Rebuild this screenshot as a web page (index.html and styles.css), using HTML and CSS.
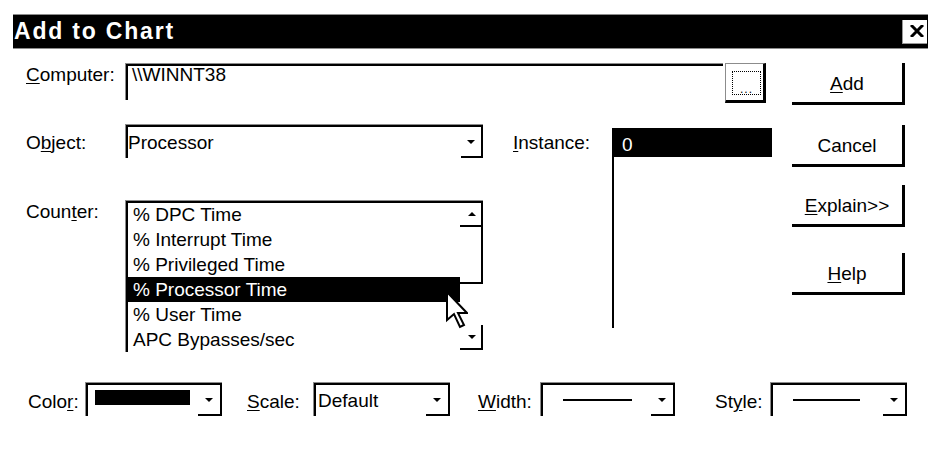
FILE: index.html
```html
<!DOCTYPE html>
<html>
<head>
  <meta charset="UTF-8" />
  <title>Add to Chart</title>
  <link rel="stylesheet" href="styles.css">
</head>
<body>
  <div class="titlebar">
    <span class="title">Add to Chart</span>
    <span class="close">
      <svg width="14" height="12" viewBox="0 0 14 12">
        <path d="M1 0 L13 12 M13 0 L1 12" stroke="#000" stroke-width="3" />
      </svg>
    </span>
  </div>

  <div class="content">
    <div class="fields">
      <div class="row-computer">
        <div class="label"><u>C</u>omputer:</div>
        <div class="text-field">\\WINNT38</div>
        <div class="browse"><div class="focus-rect">...</div></div>
      </div>

      <div class="object-grid">
        <div class="label label-mid">O<u>b</u>ject:</div>
        <div class="combo">
          <div class="combo-value">Processor</div>
          <div class="drop"><span class="arrow-down"></span></div>
        </div>
        <div class="label label-mid label-instance"><u>I</u>nstance:</div>
        <div class="instance-list">
          <div class="inst-item">0</div>
        </div>

        <div class="label">Coun<u>t</u>er:</div>
        <div class="listbox">
          <div class="items">
            <div class="item">% DPC Time</div>
            <div class="item">% Interrupt Time</div>
            <div class="item">% Privileged Time</div>
            <div class="item selected">% Processor Time</div>
            <div class="item">% User Time</div>
            <div class="item">APC Bypasses/sec</div>
          </div>
          <div class="scrollbar">
            <div class="sb-btn sb-up"><span class="arrow-up"></span></div>
            <div class="sb-thumb"></div>
            <div class="sb-track"></div>
            <div class="sb-btn sb-down"><span class="arrow-down"></span></div>
          </div>
          <svg class="cursor" width="22" height="38" viewBox="0 0 22 38">
            <path d="M1 1 L1 29 L8 23 L14 36 L18 34 L12 22 L21 22 Z" fill="#fff" stroke="#000" stroke-width="2" stroke-linejoin="miter" />
          </svg>
        </div>
      </div>
    </div>

    <div class="buttons">
      <div class="btn btn-add"><span><u>A</u>dd</span></div>
      <div class="btn btn-cancel"><span>Cancel</span></div>
      <div class="btn btn-explain"><span><u>E</u>xplain&gt;&gt;</span></div>
      <div class="btn btn-help"><span><u>H</u>elp</span></div>
    </div>
  </div>

  <div class="bottom">
    <div class="blabel color-label">Colo<u>r</u>:</div>
    <div class="combo combo-small">
      <div class="combo-value"><div class="swatch"></div></div>
      <div class="drop drop-wide"><span class="arrow-down"></span></div>
    </div>

    <div class="blabel scale-label"><u>S</u>cale:</div>
    <div class="combo combo-small">
      <div class="combo-value scale-value">Default</div>
      <div class="drop drop-wide"><span class="arrow-down"></span></div>
    </div>

    <div class="blabel width-label"><u>W</u>idth:</div>
    <div class="combo combo-small combo-width">
      <div class="combo-value"><div class="line-sample"></div></div>
      <div class="drop drop-wide"><span class="arrow-down"></span></div>
    </div>

    <div class="blabel style-label">St<u>y</u>le:</div>
    <div class="combo combo-small">
      <div class="combo-value"><div class="line-sample line-short"></div></div>
      <div class="drop drop-wide"><span class="arrow-down"></span></div>
    </div>
  </div>
</body>
</html>
```

FILE: styles.css
```css
body {
  margin: 0;
  background: #fff;
  color: #000;
  font-family: "Liberation Sans", Arial, sans-serif;
  font-size: 19px;
}
u {
  text-underline-offset: 2px;
}
.titlebar {
  display: flex;
  justify-content: space-between;
  align-items: center;
  margin: 14px 0 0 13px;
  height: 33px;
  background: #000;
  border-top: 1px solid #8c8c8c;
  border-bottom: 1px solid #8c8c8c;
}
.title {
  color: #fff;
  font-weight: bold;
  font-size: 23px;
  letter-spacing: 1.8px;
  line-height: 33px;
  padding-left: 1px;
}
.close {
  display: flex;
  justify-content: center;
  align-items: center;
  width: 25px;
  height: 24px;
  margin-right: 1px;
  background: #fff;
  border-left: 1px solid #999;
  border-bottom: 1px solid #999;
  box-sizing: border-box;
  padding-left: 3px;
}
.content {
  display: flex;
  margin-top: 14px;
  padding-left: 26px;
}
.fields {
  width: 740px;
}
.label {
  line-height: 22px;
  padding-top: 1px;
}
.label-mid {
  padding-top: 8px;
}
.row-computer {
  display: flex;
  height: 40px;
}
.row-computer .label {
  width: 99px;
}
.text-field {
  width: 598px;
  height: 37px;
  box-sizing: border-box;
  border-top: 1px solid #8c8c8c;
  border-left: 1px solid #8c8c8c;
  box-shadow: inset 2px 2px 0 #000;
  padding-left: 6px;
  line-height: 22px;
}
.browse {
  display: flex;
  width: 41px;
  height: 40px;
  margin-left: 2px;
  box-sizing: border-box;
  border-top: 1px solid #8c8c8c;
  border-left: 1px solid #8c8c8c;
  border-right: 3px solid #000;
  border-bottom: 3px solid #000;
  padding: 7px 2px 5px 6px;
}
.focus-rect {
  flex: 1;
  display: flex;
  justify-content: center;
  align-items: flex-end;
  border: 1px dotted #000;
  font-size: 12px;
  line-height: 10px;
  letter-spacing: 1px;
}
.object-grid {
  display: grid;
  grid-template-columns: 99px 358px 129px 160px;
  grid-template-rows: 34px 152px;
  row-gap: 42px;
  margin-top: 21px;
}
.label-instance {
  padding-left: 30px;
}
.combo {
  display: flex;
  height: 34px;
  box-sizing: border-box;
  border-top: 1px solid #8c8c8c;
  border-left: 1px solid #8c8c8c;
  box-shadow: inset 2px 2px 0 #000;
}
.combo-value {
  flex: 1;
  padding: 7px 0 0 2px;
  line-height: 22px;
  white-space: nowrap;
}
.drop {
  display: flex;
  justify-content: center;
  align-items: center;
  width: 22px;
  padding-top: 3px;
  box-sizing: border-box;
  border-right: 2px solid #000;
  border-bottom: 2px solid #000;
}
.drop-wide {
  width: 24px;
}
.arrow-down,
.arrow-up {
  width: 0;
  height: 0;
  border-left: 4px solid transparent;
  border-right: 4px solid transparent;
}
.arrow-down {
  border-top: 4px solid #000;
}
.arrow-up {
  border-bottom: 4px solid #000;
}
.instance-list {
  grid-row: 1 / span 2;
  grid-column: 4;
  margin-top: 4px;
  height: 200px;
  border-left: 2px solid #000;
}
.inst-item {
  height: 29px;
  box-sizing: border-box;
  background: #000;
  color: #fff;
  padding: 4px 0 0 8px;
  line-height: 25px;
}
.listbox {
  position: relative;
  display: flex;
  height: 152px;
  box-sizing: border-box;
  border-top: 1px solid #8c8c8c;
  border-left: 1px solid #8c8c8c;
  box-shadow: inset 2px 2px 0 #000;
}
.items {
  flex: 1;
  padding: 1px 0 0 2px;
}
.item {
  height: 25px;
  line-height: 25px;
  padding-left: 5px;
  white-space: nowrap;
}
.item.selected {
  background: #000;
  color: #fff;
}
.scrollbar {
  display: flex;
  flex-direction: column;
  width: 23px;
}
.sb-btn {
  display: flex;
  justify-content: center;
  align-items: center;
  height: 24px;
  box-sizing: border-box;
  padding-left: 3px;
  border-right: 2px solid #000;
  border-bottom: 2px solid #000;
}
.sb-up {
  margin-top: 2px;
}
.sb-thumb {
  height: 57px;
  box-sizing: border-box;
  border-right: 2px solid #000;
  border-bottom: 2px solid #000;
}
.sb-track {
  flex: 1;
}
.sb-down {
  height: 25px;
  margin-bottom: 2px;
}
.cursor {
  position: absolute;
  left: 320px;
  top: 90px;
}
.buttons {
  display: flex;
  flex-direction: column;
  width: 113px;
  margin-left: 26px;
}
.btn {
  display: flex;
  justify-content: center;
  align-items: center;
  height: 42px;
  box-sizing: border-box;
  padding-top: 2px;
  border-right: 3px solid #000;
  border-bottom: 3px solid #000;
}
.btn-cancel {
  margin-top: 20px;
}
.btn-explain {
  margin-top: 18px;
}
.btn-help {
  margin-top: 26px;
}
.bottom {
  display: flex;
  margin-top: 30px;
  padding-left: 28px;
}
.blabel {
  padding-top: 9px;
  line-height: 22px;
}
.color-label {
  width: 57px;
}
.scale-label {
  width: 66px;
  margin-left: 25px;
}
.width-label {
  width: 62px;
  margin-left: 28px;
}
.style-label {
  width: 55px;
  margin-left: 40px;
}
.combo-small {
  width: 137px;
}
.combo-width {
  width: 135px;
}
.swatch {
  width: 95px;
  height: 15px;
  margin: 0 0 0 7px;
  background: #000;
}
.scale-value {
  padding-left: 4px;
}
.line-sample {
  width: 69px;
  height: 2px;
  margin: 9px 0 0 20px;
  background: #000;
}
.line-short {
  width: 67px;
}
```
